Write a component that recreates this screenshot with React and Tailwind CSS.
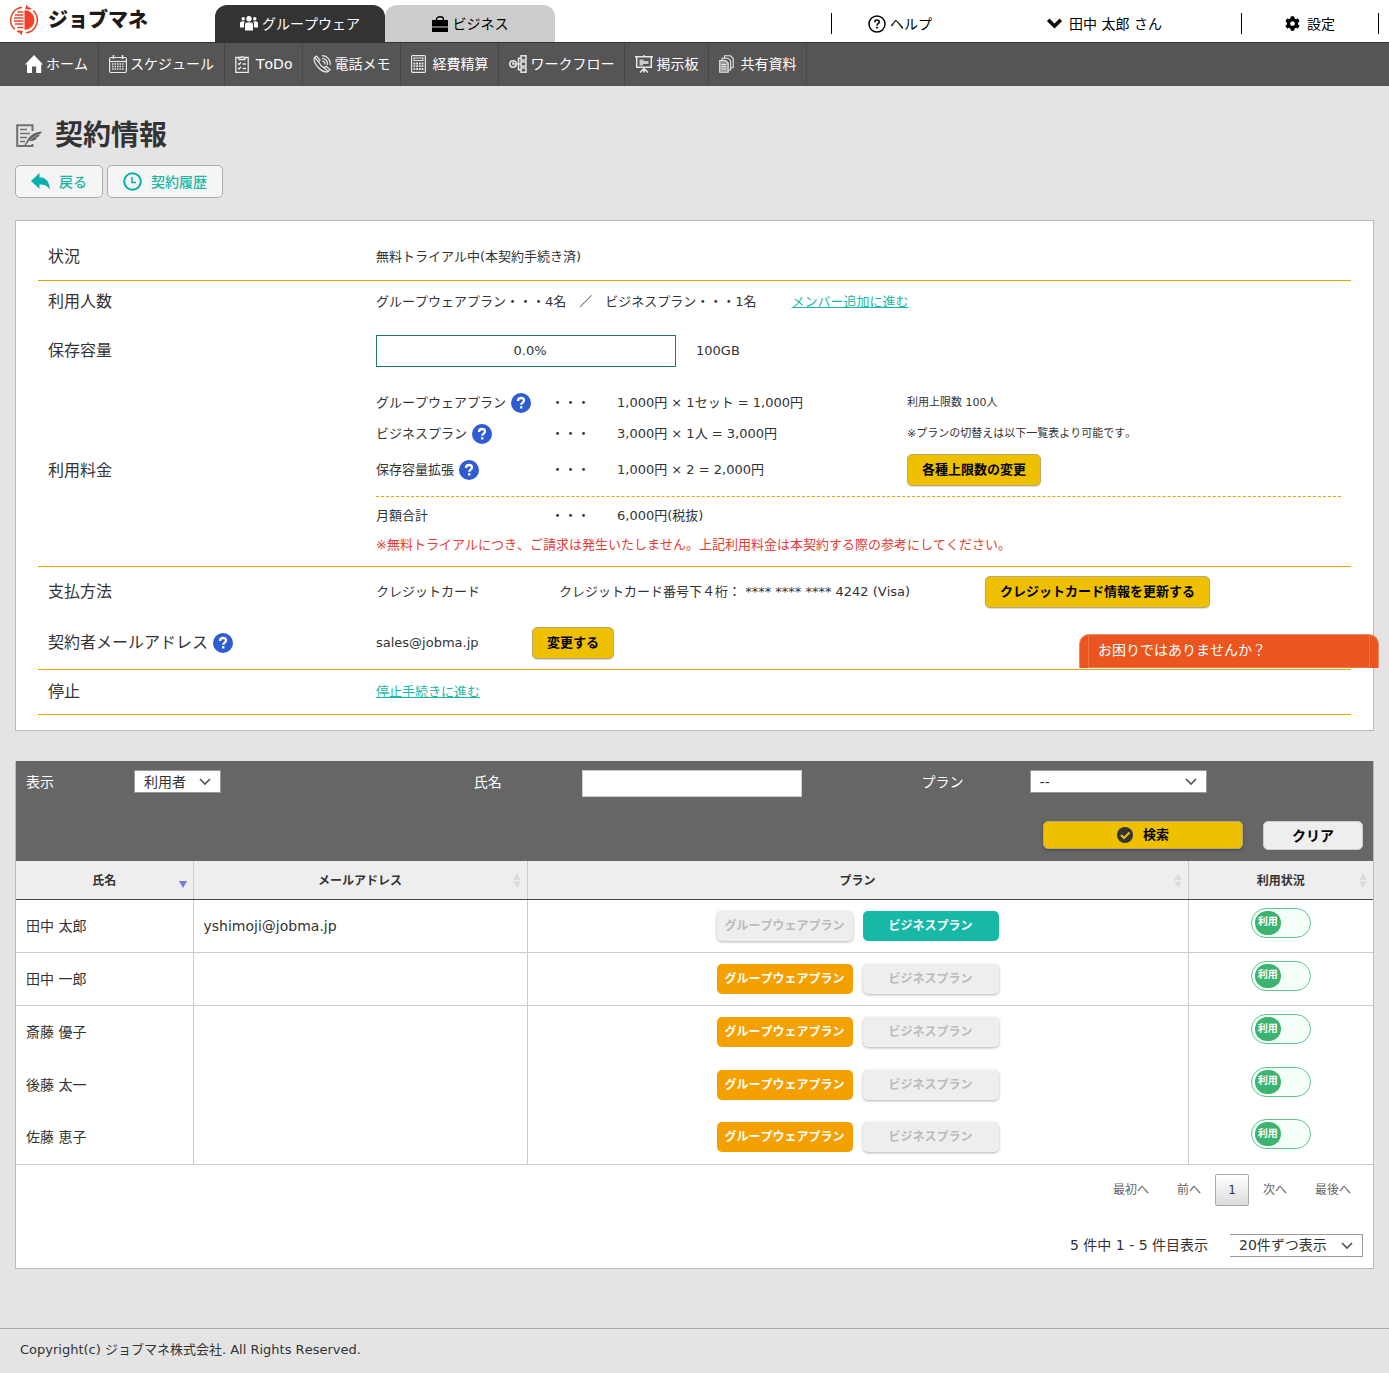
import { useState } from 'react'
import { FaCog } from 'react-icons/fa'

const NAV_ITEMS = [
  { label: 'ホーム', icon: HomeIcon },
  { label: 'スケジュール', icon: CalendarIcon },
  { label: 'ToDo', icon: ClipboardIcon },
  { label: '電話メモ', icon: PhoneIcon },
  { label: '経費精算', icon: CalculatorIcon },
  { label: 'ワークフロー', icon: WorkflowIcon },
  { label: '掲示板', icon: BoardIcon },
  { label: '共有資料', icon: FilesIcon },
]

const FEES = [
  { name: 'グループウェアプラン', amount: '1,000円 × 1セット = 1,000円', height: 'h-[31px]' },
  { name: 'ビジネスプラン', amount: '3,000円 × 1人 = 3,000円', height: 'h-[31px]' },
  { name: '保存容量拡張', amount: '1,000円 × 2 = 2,000円', height: 'h-[42px]' },
]

const MEMBERS = [
  { name: '田中 太郎', email: 'yshimoji@jobma.jp', plan: 'business', line: true },
  { name: '田中 一郎', email: '', plan: 'groupware', line: true },
  { name: '斎藤 優子', email: '', plan: 'groupware', line: false },
  { name: '後藤 太一', email: '', plan: 'groupware', line: false },
  { name: '佐藤 恵子', email: '', plan: 'groupware', line: true },
]

function Logo() {
  return (
    <svg width="30" height="32" viewBox="0 0 30 32" fill="none">
      <path d="M15.500 6a10 10 0 0 1 0 20z" fill="#ee4128" />
      <path d="M8.500 8h6M6 11h8.500M5 14h9.500M5 17h9.500M6 20h8.500M8.500 23.500h6" stroke="#ee4128" strokeWidth="1.500" />
      <path d="M13 3.200A13 13 0 0 0 5.800 25.500" stroke="#ee4128" strokeWidth="1.500" />
      <path d="M17 28.800A13 13 0 0 0 24.200 6.500" stroke="#ee4128" strokeWidth="1.500" />
      <path d="M17.500 0.500l3.200 5.300-4.500-.8zM12.500 31.500L9.300 26.200l4.500.8z" fill="#ee4128" />
      <path d="M18 3.400a13 13 0 0 1 4 1.700M12 28.600a13 13 0 0 1-4-1.700" stroke="#ee4128" strokeWidth="1.500" />
    </svg>
  )
}

function HomeIcon() {
  return (
    <svg width="18" height="18" viewBox="0 0 18 18" fill="#fff">
      <path d="M9 0L18 9.500h-1.800V18h-5v-6.500H7V18H2V9.500H0z" />
    </svg>
  )
}

function CalendarIcon() {
  return (
    <svg width="18" height="18" viewBox="0 0 18 18" fill="none" stroke="#e8e8e8">
      <rect x="0.600" y="2.500" width="16.800" height="15" rx="1.500" strokeWidth="1.200" />
      <path d="M1 6.500h16" strokeWidth="1.200" />
      <path d="M4.500 0v4M13.500 0v4" strokeWidth="1.600" />
      <path d="M3 9h12M3 11.500h12M3 14h12" strokeWidth="1.500" strokeDasharray="1.500 1" />
    </svg>
  )
}

function ClipboardIcon() {
  return (
    <svg width="14" height="18" viewBox="0 0 14 18" fill="none" stroke="#e8e8e8" strokeWidth="1.300">
      <path d="M4 2.500H0.800v14.800h12.400V2.500H10" />
      <path d="M4 4.500v-2h1.800a1.300 1.300 0 0 1 2.400 0H10v2z" />
      <path d="M3 8.500l1 1 2-2.200M3 13l1 1 2-2.200M7.500 9h3.500M7.500 13.500h3.500" />
    </svg>
  )
}

function PhoneIcon() {
  return (
    <svg width="18" height="18" viewBox="0 0 18 18" fill="none" stroke="#e8e8e8" strokeWidth="1.200" strokeLinecap="round">
      <path d="M3.500 1L1.500 2.500C-0.500 8 8 17.500 14.500 17l2.500-2.200-3.800-3.600-2.400 1.600C8.500 11.500 6.500 9 5.500 6.800L7 5z" />
      <path d="M2.200 2.800l3.200 4M11.500 13l3.300 3.500" />
      <path d="M9.500 6a3 3 0 0 1 2.500 3M9.500 3.300a5.500 5.500 0 0 1 5 6M9.500 0.700a8 8 0 0 1 7.700 8.600" />
    </svg>
  )
}

function CalculatorIcon() {
  return (
    <svg width="15" height="18" viewBox="0 0 15 18" fill="none" stroke="#e8e8e8">
      <rect x="0.600" y="0.600" width="13.800" height="16.800" rx="1" strokeWidth="1.200" />
      <rect x="3" y="3" width="9" height="2.500" strokeWidth="1" />
      <path d="M2.500 8.500h10M2.500 11.200h10M2.500 14h10" strokeWidth="1.800" strokeDasharray="1.800 0.900" />
    </svg>
  )
}

function WorkflowIcon() {
  return (
    <svg width="18" height="18" viewBox="0 0 18 18" fill="none" stroke="#e8e8e8" strokeWidth="1.500">
      <circle cx="4" cy="9" r="3.200" />
      <path d="M4 7v2h2M7.200 9H12M12 3.200H9.500v11.600H12" />
      <rect x="12" y="0.800" width="5" height="4.200" />
      <rect x="12" y="6.900" width="5" height="4.200" />
      <rect x="12" y="13" width="5" height="4.200" />
    </svg>
  )
}

function BoardIcon() {
  return (
    <svg width="18" height="18" viewBox="0 0 18 18" fill="none" stroke="#e8e8e8" strokeWidth="1.500">
      <path d="M0 1.700h18M1.700 2v10.300h14.600V2M9 0v1.500M9 12.500v5M8.500 14L5 17.500M9.500 14l3.500 3.500" />
      <path d="M4.500 4.500h4V6h5v3H8v1.500H4.500z" fill="#ccc" stroke="none" />
    </svg>
  )
}

function FilesIcon() {
  return (
    <svg width="15" height="18" viewBox="0 0 15 18" fill="none" stroke="#e8e8e8" strokeWidth="1.100">
      <path d="M0.700 5.500h6l2.500 2.500v9.300H0.700z" fill="#999" />
      <path d="M3 5V3.200h6l2.600 2.500v9.300H9.500M5.500 3V0.800h6L14.200 3.500v9.300H12" />
      <path d="M2.300 9.500h5M2.300 11.700h5M2.300 14h5" />
    </svg>
  )
}

function MembersIcon() {
  return (
    <svg width="18" height="15" viewBox="0 0 18 15" fill="#fff">
      <circle cx="9" cy="2.800" r="2.700" />
      <circle cx="3.200" cy="2.800" r="1.700" />
      <circle cx="14.800" cy="2.800" r="1.700" />
      <path d="M5 14.500V8.500C5 7 6 6.300 9 6.300s4 .7 4 2.200v6zM0 11.500v-4C0 6 1 5.300 2.800 5.300c.8 0 1.200.1 1.900.4L4 7.500v4zM18 11.500v-4c0-1.500-1-2.200-2.800-2.200-.8 0-1.200.1-1.900.4l.7 1.800v4z" />
    </svg>
  )
}

function BagIcon() {
  return (
    <svg width="16" height="16" viewBox="0 0 16 16">
      <path d="M4.500 4.500V3.500C4.500 2 6 .8 8 .8s3.500 1.200 3.500 2.700v1" fill="none" stroke="#000" strokeWidth="1.400" />
      <path d="M0 4h16v6.500H0zM0 11.500h16V16H0z" />
    </svg>
  )
}

function ContractIcon() {
  return (
    <svg width="27" height="24" viewBox="0 0 27 24" fill="none">
      <path d="M16.500 7V1.200H1.200V22H16.500V20" stroke="#707070" strokeWidth="2" />
      <path d="M4 5.500h7M4 9.500h10M4 13.500h7M4 17.500h5" stroke="#707070" strokeWidth="1.600" />
      <path d="M26 7.500c-6 .5-12.500 3.500-14.500 8.500L8.500 21l1 .5 3.500-4.500c5 .3 7-1.500 7.800-3l-1.500-.2c2.200-.4 3.700-1.300 4.200-2.600l-1.300-.2c2-.8 3.300-2 3.800-3.500z" fill="#606060" />
      <path d="M12.500 17L22 10" stroke="#ccc" strokeWidth="0.600" />
    </svg>
  )
}

function BackIcon() {
  return (
    <svg width="19" height="17" viewBox="0 0 19 17" fill="#04afad">
      <path d="M8.500 0v4.200C14.500 4.500 18.500 8 18.700 16.500 16.500 12.800 13.500 11.500 8.500 11.500v4.300L0 8z" />
    </svg>
  )
}

function ClockIcon() {
  return (
    <svg width="19" height="19" viewBox="0 0 19 19" fill="none" stroke="#04afad">
      <circle cx="9.500" cy="9.500" r="8.300" strokeWidth="2" />
      <path d="M9 5v5.500h4" strokeWidth="1.500" />
    </svg>
  )
}

function HelpIcon() {
  return (
    <svg width="18" height="18" viewBox="0 0 18 18" fill="none" stroke="#000">
      <circle cx="9" cy="9" r="8" strokeWidth="1.500" />
      <path d="M6.800 7.200c0-1.400 1-2.200 2.200-2.200s2.200.8 2.200 2c0 1.600-2.200 1.600-2.200 3.400" strokeWidth="1.600" />
      <path d="M9 11.700v1.700" strokeWidth="1.700" />
    </svg>
  )
}

function QuestionMark() {
  return (
    <a href="#help" aria-label="ヘルプ" className="ml-[5px] inline-block shrink-0">
      <svg width="20" height="20" viewBox="0 0 20 20" fill="none" stroke="#fff">
        <circle cx="10" cy="10" r="10" fill="#2f5bd3" stroke="none" />
        <path d="M7 8c0-2 1.300-3 3-3s3 1 3 2.500c0 2.200-2.800 2-2.800 4.300" strokeWidth="2.300" />
        <path d="M10.200 13.200v2.300" strokeWidth="2.400" />
      </svg>
    </a>
  )
}

function Chevron() {
  return (
    <svg width="12" height="8" viewBox="0 0 12 8" fill="none" stroke="#555" strokeWidth="1.700" className="pointer-events-none absolute right-[10px] top-[8px]">
      <path d="M1 1l5 5 5-5" />
    </svg>
  )
}

function Select({ id, label, options, className, borderClass = 'border' }) {
  return (
    <span className={`relative inline-block ${className}`}>
      <select id={id} aria-label={label} className={`block h-[23px] w-full appearance-none border-[#999] bg-white pr-6 pl-[9px] text-sm leading-5 text-[#333] ${borderClass}`}>
        {options.map((option) => (
          <option key={option}>{option}</option>
        ))}
      </select>
      <Chevron />
    </span>
  )
}

function YellowButton({ children }) {
  return (
    <button className="h-8 rounded-[5px] border border-[#b9aa6c] bg-[#efc000] px-[14px] text-[13px] leading-5 font-bold text-black shadow-[0_1px_1px_rgba(0,0,0,0.15)]">
      {children}
    </button>
  )
}

function Header() {
  return (
    <header>
      <div className="flex h-[42px] bg-white">
        <a href="#top" className="flex w-[215px] items-center pb-[2px] pl-[9px]">
          <Logo />
          <span className="ml-[9px] text-xl leading-6 font-black text-[#231815]">ジョブマネ</span>
        </a>
        <a href="#groupware" className="mt-[5px] flex w-[170px] items-center justify-center gap-1 rounded-t-xl bg-[#333] text-sm text-white">
          <MembersIcon />
          グループウェア
        </a>
        <a href="#business" className="mt-[5px] flex w-[170px] items-center justify-center gap-[5px] rounded-t-xl bg-[#ccc] text-sm text-black">
          <BagIcon />
          ビジネス
        </a>
        <div className="mt-[13px] mr-[10px] ml-auto flex h-[21px] items-center text-sm text-black">
          <a href="#help" className="flex h-full w-[137px] items-center justify-center gap-1 border-l border-black">
            <HelpIcon />
            ヘルプ
          </a>
          <button className="flex h-full w-[273px] items-center justify-center gap-[7px]">
            <svg width="15" height="11" viewBox="0 0 15 11" fill="none" stroke="#111" strokeWidth="3.600">
              <path d="M1.200 1.800l6.300 6.200 6.300-6.200" />
            </svg>
            田中 太郎 さん
          </button>
          <a href="#settings" className="flex h-full w-[138px] items-center justify-center gap-[7px] border-x border-black">
            <FaCog size={15} />
            設定
          </a>
        </div>
      </div>
      <nav className="flex h-11 border-t border-[#333] bg-[#555] pl-[15px]">
        {NAV_ITEMS.map(({ label, icon: Icon }) => (
          <a key={label} href="#nav" className="flex items-center gap-[3px] border-r border-[#484848] px-[10px] pb-[2px] text-sm text-white">
            <span className="flex w-[18px]">
              <Icon />
            </span>
            {label}
          </a>
        ))}
      </nav>
    </header>
  )
}

function Row({ label, className = '', children }) {
  return (
    <div className={`flex items-center ${className}`}>
      <dt className="flex w-[338px] shrink-0 items-center pl-[10px] text-base text-[#333]">{label}</dt>
      <dd className="flex grow items-center">{children}</dd>
    </div>
  )
}

function ContractPanel() {
  return (
    <section className="relative mt-[22px] border border-[#bbb] bg-white px-[22px] pt-[13px] pb-[15px] text-[13px] leading-5">
      <dl>
        <Row label="状況" className="h-[47px] border-b border-[#f0a000]">無料トライアル中(本契約手続き済)</Row>
        <Row label="利用人数" className="h-[42px]">
          グループウェアプラン・・・4名　／　ビジネスプラン・・・1名
          <a href="#members" className="ml-[35px] text-[#18b8a6] underline">メンバー追加に進む</a>
        </Row>
        <Row label="保存容量" className="h-14">
          <div className="flex h-8 w-[300px] items-center justify-center border border-[#1f7a6b] pl-2">0.0%</div>
          <span className="ml-5">100GB</span>
        </Row>
        <Row label="利用料金" className="border-b border-[#f0a000] pt-2 pb-[11px]">
          <div className="grow pr-[10px]">
            <div className="flex border-b border-dashed border-[#f0a000] pb-[5px]">
              <div className="w-[531px]">
                {FEES.map((fee) => (
                  <div key={fee.name} className={`flex items-center ${fee.height}`}>
                    <span className="flex w-[175px] items-center">
                      {fee.name}
                      <QuestionMark />
                    </span>
                    <span className="w-[66px]">・・・</span>
                    <span>{fee.amount}</span>
                  </div>
                ))}
              </div>
              <div className="text-[11px]">
                <p className="flex h-[31px] items-center">利用上限数 100人</p>
                <p className="flex h-[31px] items-center">※プランの切替えは以下一覧表より可能です。</p>
                <div className="flex h-[42px] items-center">
                  <YellowButton>各種上限数の変更</YellowButton>
                </div>
              </div>
            </div>
            <div className="flex h-[38px] items-center">
              <span className="w-[175px]">月額合計</span>
              <span className="w-[66px]">・・・</span>
              <span>6,000円(税抜)</span>
            </div>
            <p className="text-[#e63c32]">※無料トライアルにつき、ご請求は発生いたしません。上記利用料金は本契約する際の参考にしてください。</p>
          </div>
        </Row>
        <Row label="支払方法" className="h-[50px]">
          <span className="w-[183px]">クレジットカード</span>
          <span className="w-[426px]">クレジットカード番号下４桁： **** **** **** 4242 (Visa)</span>
          <YellowButton>クレジットカード情報を更新する</YellowButton>
        </Row>
        <Row label={<>契約者メールアドレス<QuestionMark /></>} className="h-[53px] border-b border-[#f0a000]">
          <span className="w-[156px]">sales@jobma.jp</span>
          <YellowButton>変更する</YellowButton>
        </Row>
        <Row label="停止" className="h-[45px] border-b border-[#f0a000]">
          <a href="#stop" className="text-[#18b8a6] underline">停止手続きに進む</a>
        </Row>
      </dl>

      {/* Chat bubble, floats over the right edge of the panel */}
      <button className="absolute right-[-6px] bottom-[62px] h-[34px] w-[300px] rounded-t-[10px] border border-b-0 border-[#f08a64] bg-[#ea5520] px-2 text-left text-sm text-white">
        <span className="block h-full border-x border-b border-[#ee7448] px-[9px] leading-[30px]">お困りではありませんか？</span>
      </button>
    </section>
  )
}

function SearchPanel() {
  return (
    <form className="h-[100px] bg-[#666] text-sm text-white" onSubmit={(e) => e.preventDefault()}>
      <div className="grid grid-cols-[33%_33%_34%] pt-[9px]">
        <div className="flex items-start pl-[10px]">
          <label htmlFor="show" className="w-[108px] leading-6">表示</label>
          <Select id="show" options={['利用者', 'すべて']} className="w-[87px]" />
        </div>
        <div className="flex items-start pl-[10px]">
          <label htmlFor="name" className="w-[108px] leading-6">氏名</label>
          <input id="name" type="text" className="h-[27px] w-[220px] border border-[#ccc] bg-white px-2 text-[#333]" />
        </div>
        <div className="flex items-start pl-[10px]">
          <label htmlFor="plan" className="w-[108px] leading-6">プラン</label>
          <Select id="plan" options={['--', 'グループウェアプラン', 'ビジネスプラン']} className="w-[177px]" />
        </div>
      </div>
      <div className="flex items-start justify-end gap-5 pt-6 pr-[10px]">
        <button className="flex h-7 w-[200px] items-center justify-center gap-[10px] rounded-[5px] border border-[#b9aa6c] bg-[#efc000] text-[13px] font-bold text-black shadow-[0_1px_3px_rgba(0,0,0,0.3)]">
          <svg width="16" height="16" viewBox="0 0 16 16" fill="none">
            <circle cx="8" cy="8" r="8" fill="#333" />
            <path d="M4 8l3 3 5.500-5.500" stroke="#efc000" strokeWidth="2" />
          </svg>
          検索
        </button>
        <button type="reset" className="h-[29px] w-[100px] rounded-[5px] border border-[#ccc] bg-[#eee] text-sm font-bold text-black">クリア</button>
      </div>
    </form>
  )
}

function HeadCell({ children, active, className = '' }) {
  return (
    <th className={`relative h-[38px] border-b border-b-[#444] p-0 pt-[2px] text-xs font-bold ${className}`}>
      {children}
      {active ? (
        <svg width="8" height="7" viewBox="0 0 8 7" className="absolute right-[6px] bottom-[11px]">
          <path d="M0 0h8L4 7z" fill="#7b7bdc" />
        </svg>
      ) : (
        <svg width="8" height="15" viewBox="0 0 8 15" className="absolute right-[6px] bottom-[11px]">
          <path d="M0 7h8L4 0zM0 8.500h8L4 15z" fill="#dcdcdc" />
        </svg>
      )}
    </th>
  )
}

function PlanButton({ active, activeClass, children }) {
  return (
    <button
      className={`h-[30px] w-[136px] rounded-[5px] text-xs font-bold ${
        active ? `text-white ${activeClass}` : 'bg-[#eee] text-[#bbb] shadow-[0_1px_3px_rgba(0,0,0,0.3)]'
      }`}
    >
      {children}
    </button>
  )
}

function StatusToggle({ name }) {
  const [on, setOn] = useState(true)
  return (
    <label className="mb-[6px] inline-flex h-[30px] w-[60px] items-center rounded-full border border-[#62c48e] bg-[#f5fffa] px-[3px] align-middle">
      <input type="checkbox" checked={on} onChange={() => setOn(!on)} aria-label={`${name} 利用状況`} className="sr-only" />
      <span className={`flex h-6 w-[26px] items-center justify-center rounded-full text-[10px] font-bold text-white ${on ? 'bg-[#3cb371]' : 'ml-auto bg-[#999]'}`}>
        {on ? '利用' : '停止'}
      </span>
    </label>
  )
}

function MemberTable() {
  return (
    <table className="w-full table-fixed border-collapse bg-white text-sm text-[#333]">
      <colgroup>
        <col className="w-[177px]" />
        <col className="w-[334px]" />
        <col />
        <col className="w-[185px]" />
      </colgroup>
      <thead className="bg-[#eee]">
        <tr>
          <HeadCell active className="border-r border-r-[#ccc]">氏名</HeadCell>
          <HeadCell className="border-r border-r-[#ccc]">メールアドレス</HeadCell>
          <HeadCell className="border-r border-r-[#ccc]">プラン</HeadCell>
          <HeadCell>利用状況</HeadCell>
        </tr>
      </thead>
      <tbody>
        {MEMBERS.map((member) => (
          <tr key={member.name} className={`h-[53px] ${member.line ? 'border-b border-[#ccc]' : ''}`}>
            <td className="border-r border-r-[#ccc] px-[10px]">{member.name}</td>
            <td className="border-r border-r-[#ccc] px-[10px]">{member.email}</td>
            <td className="border-r border-r-[#ccc]">
              <div className="flex justify-center gap-[10px]">
                <PlanButton active={member.plan === 'groupware'} activeClass="bg-[#f4a000]">グループウェアプラン</PlanButton>
                <PlanButton active={member.plan === 'business'} activeClass="bg-[#18b8a6]">ビジネスプラン</PlanButton>
              </div>
            </td>
            <td className="text-center">
              <StatusToggle name={member.name} />
            </td>
          </tr>
        ))}
      </tbody>
    </table>
  )
}

function Pagination() {
  return (
    <div className="pr-[10px] pb-[11px]">
      <div className="flex items-center justify-end pt-[9px] pr-3 text-xs text-[#666]">
        <a href="#first">最初へ</a>
        <a href="#prev" className="ml-7">前へ</a>
        <button className="mx-[14px] h-8 w-[34px] rounded-[2px] border border-[#aaa] bg-linear-to-b from-white to-[#dcdcdc] text-[#333]">1</button>
        <a href="#next">次へ</a>
        <a href="#last" className="ml-7">最後へ</a>
      </div>
      <div className="mt-7 flex items-center justify-end text-sm text-[#333]">
        <span>5 件中 1 - 5 件目表示</span>
        <Select id="per-page" label="表示件数" options={['20件ずつ表示', '50件ずつ表示']} className="ml-[22px] w-[133px]" borderClass="border border-l-0" />
      </div>
    </div>
  )
}

function App() {
  return (
    <div className="flex min-h-screen flex-col bg-[#e4e4e4] font-['DejaVu_Sans','Noto_Sans_CJK_JP',sans-serif] text-[#333] [font-kerning:none]">
      <Header />

      <main className="px-[15px] pt-[30px]">
        <h1 className="flex items-center gap-3 pl-[1px] text-[28px] leading-10 font-bold">
          <ContractIcon />
          契約情報
        </h1>
        <div className="mt-[9px] flex gap-1 text-sm font-medium text-[#18b8a6]">
          <button className="flex h-[33px] items-center gap-[9px] rounded-[5px] border border-[#aaa] bg-[#f5f5f5] px-[15px]">
            <BackIcon />
            戻る
          </button>
          <button className="flex h-[33px] items-center gap-[9px] rounded-[5px] border border-[#aaa] bg-[#f5f5f5] px-[15px]">
            <ClockIcon />
            契約履歴
          </button>
        </div>

        <ContractPanel />

        <section className="mt-[30px] border border-t-0 border-[#bbb] bg-white">
          <SearchPanel />
          <MemberTable />
          <Pagination />
        </section>
      </main>

      <footer className="mt-[59px] border-t border-[#aaa] px-5 py-[11px] text-[13px] leading-5">
        Copyright(c) ジョブマネ株式会社. All Rights Reserved.
      </footer>
    </div>
  )
}

export default App
